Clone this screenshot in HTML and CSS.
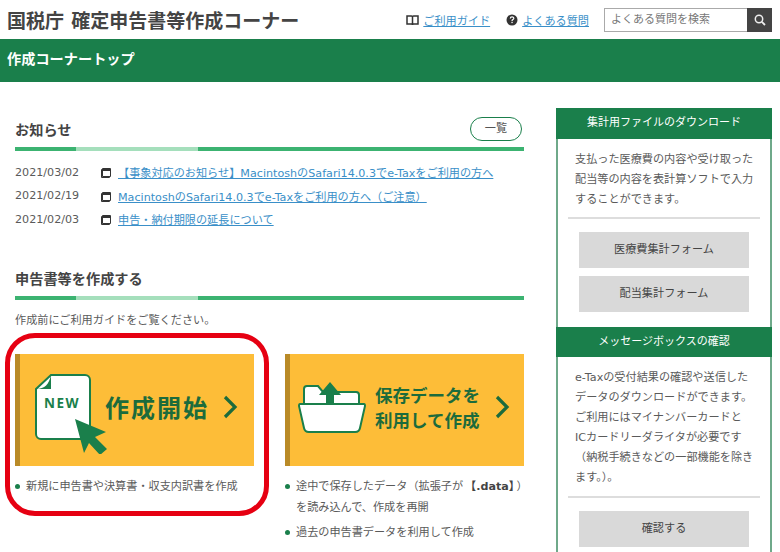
FILE: index.html
```html
<!DOCTYPE html>
<html lang="ja">

<head>
    <meta charset="UTF-8">
    <title>確定申告書等作成コーナー</title>
    <link rel="stylesheet" href="styles.css">
</head>

<body>
    <header class="site-header">
        <h1 class="site-title">国税庁 確定申告書等作成コーナー</h1>
        <div class="header-tools">
            <svg class="tool-icon" width="13" height="12" viewBox="0 0 13 12">
                <path d="M1 2h4.500c.6 0 1 .4 1 1v8c0-.6-.4-1-1-1H1zM12 2H7.500c-.6 0-1 .4-1 1v8c0-.6.4-1 1-1H12z" fill="none" stroke="#333" stroke-width="1.500"/>
            </svg>
            <a class="tool-link tool-guide" href="#">ご利用ガイド</a>
            <svg class="tool-icon" width="12" height="12" viewBox="0 0 12 12">
                <circle cx="6" cy="6" r="5.500" fill="#333"/>
                <path d="M4.300 4.600c0-2.200 3.500-2.200 3.500-.2 0 1.200-1.800 1.200-1.800 2.500" fill="none" stroke="#fff" stroke-width="1.200"/>
                <rect x="5.400" y="7.800" width="1.300" height="1.300" fill="#fff"/>
            </svg>
            <a class="tool-link" href="#">よくある質問</a>
            <form class="search">
                <input class="search-input" type="text" placeholder="よくある質問を検索">
                <button class="search-button" type="button" aria-label="検索">
                    <svg width="12" height="12" viewBox="0 0 12 12">
                        <circle cx="5" cy="5" r="3.700" fill="none" stroke="#eee" stroke-width="1.500"/>
                        <path d="M7.800 7.800L11 11" stroke="#eee" stroke-width="1.800"/>
                    </svg>
                </button>
            </form>
        </div>
    </header>

    <div class="page-bar">作成コーナートップ</div>

    <div class="layout">
        <main class="main">
            <section class="news">
                <div class="section-head">
                    <h2>お知らせ</h2>
                    <a class="pill" href="#">一覧</a>
                </div>
                <div class="rule"></div>
                <ul class="news-list">
                    <li>
                        <span class="date">2021/03/02</span>
                        <span class="win-icon"></span>
                        <a href="#">【事象対応のお知らせ】MacintoshのSafari14.0.3でe-Taxをご利用の方へ</a>
                    </li>
                    <li>
                        <span class="date">2021/02/19</span>
                        <span class="win-icon"></span>
                        <a href="#">MacintoshのSafari14.0.3でe-Taxをご利用の方へ（ご注意）</a>
                    </li>
                    <li>
                        <span class="date">2021/02/03</span>
                        <span class="win-icon"></span>
                        <a href="#">申告・納付期限の延長について</a>
                    </li>
                </ul>
            </section>

            <section class="create">
                <div class="section-head">
                    <h2>申告書等を作成する</h2>
                </div>
                <div class="rule"></div>
                <p class="lead">作成前にご利用ガイドをご覧ください。</p>
                <div class="cards">
                    <div class="card card-new">
                        <a class="big-button" href="#">
                            <svg class="new-icon" width="74" height="80" viewBox="0 0 74 80">
                                <path d="M16 1H50a5 5 0 0 1 5 5V60a5 5 0 0 1-5 5H6a5 5 0 0 1-5-5V15z" fill="#fff" stroke="#1a7f4b" stroke-width="2"/>
                                <path d="M1 15c9 0 13-5 15-14v14z" fill="#1a7f4b"/>
                                <text x="27" y="34" text-anchor="middle" class="new-text">NEW</text>
                                <path d="M40 45L71 58 60 63 72 75 65 81 54 69 49 79z" fill="#1a7f4b"/>
                            </svg>
                            <span class="big-label">作成開始</span>
                            <svg class="chevron" width="15" height="24" viewBox="0 0 15 24">
                                <path d="M2 2L12 12 2 22" fill="none" stroke="#1c6b3c" stroke-width="3.200"/>
                            </svg>
                        </a>
                        <ul class="notes">
                            <li>新規に申告書や決算書・収支内訳書を作成</li>
                        </ul>
                    </div>
                    <div class="card card-saved">
                        <a class="big-button" href="#">
                            <svg class="folder-icon" width="68" height="52" viewBox="0 0 68 52">
                                <path d="M6 24V7a3 3 0 0 1 3-3h11l5 6h33a3 3 0 0 1 3 3v11z" fill="#fff" stroke="#1a7f4b" stroke-width="2"/>
                                <path d="M2 22h64c1 0 1 1 1 2l-5 22a5 5 0 0 1-5 4H11a5 5 0 0 1-5-4L1 24c0-1 0-2 1-2z" fill="#fff" stroke="#1a7f4b" stroke-width="2"/>
                                <path d="M32 0L43 13H36V23H28V13H21z" fill="#1a7f4b"/>
                            </svg>
                            <span class="big-label-small">保存データを<br>利用して作成</span>
                            <svg class="chevron" width="15" height="24" viewBox="0 0 15 24">
                                <path d="M2 2L12 12 2 22" fill="none" stroke="#1c6b3c" stroke-width="3.200"/>
                            </svg>
                        </a>
                        <ul class="notes">
                            <li>途中で保存したデータ（拡張子が<b>【.data】</b>）<br>を読み込んで、作成を再開</li>
                            <li>過去の申告書データを利用して作成</li>
                        </ul>
                    </div>
                </div>
            </section>
            <div class="highlight"></div>
        </main>

        <aside class="side">
            <h3 class="side-head">集計用ファイルのダウンロード</h3>
            <div class="side-body">
                <p class="side-text">支払った医療費の内容や受け取った<br>配当等の内容を表計算ソフトで入力<br>することができます。</p>
                <hr class="side-line">
                <a class="side-button" href="#">医療費集計フォーム</a>
                <a class="side-button" href="#">配当集計フォーム</a>
            </div>
            <h3 class="side-head">メッセージボックスの確認</h3>
            <div class="side-body">
                <p class="side-text">e-Taxの受付結果の確認や送信した<br>データのダウンロードができます。<br>ご利用にはマイナンバーカードと<br>ICカードリーダライタが必要です<br>（納税手続きなどの一部機能を除き<br>ます。）。</p>
                <hr class="side-line">
                <a class="side-button" href="#">確認する</a>
            </div>
        </aside>
    </div>
</body>

</html>
```

FILE: styles.css
```css
html,
body {
    height: 552px;
    overflow: hidden;
}

body {
    margin: 0;
    font-family: "DejaVu Sans", "Noto Sans CJK JP", sans-serif;
    font-size: 11.150px;
    color: #5a5a5a;
    background: #fff;
}

a {
    color: #3a8fc8;
}

.site-header {
    display: flex;
    justify-content: space-between;
    align-items: center;
    height: 39px;
    padding: 0 8px 0 7px;
}

.site-title {
    margin: 0;
    font-family: "Noto Sans CJK JP", sans-serif;
    font-size: 19px;
    font-weight: 700;
    word-spacing: 3px;
    color: #444;
    white-space: nowrap;
}

.header-tools {
    display: flex;
    align-items: center;
}

.tool-icon {
    margin-right: 4px;
}

.tool-link {
    white-space: nowrap;
}

.tool-guide {
    margin-right: 16px;
}

.search {
    display: flex;
    margin-left: 15px;
}

.search-input {
    box-sizing: border-box;
    width: 143px;
    height: 24px;
    padding: 0 6px;
    border: 1px solid #aaa;
    border-right: none;
    font-family: inherit;
    font-size: 11px;
}

.search-input::placeholder {
    color: #777;
}

.search-button {
    display: flex;
    align-items: center;
    justify-content: center;
    width: 25px;
    height: 24px;
    padding: 0;
    border: none;
    background: #444;
}

.page-bar {
    height: 43px;
    padding-left: 7px;
    line-height: 38px;
    font-family: "Noto Sans CJK JP", sans-serif;
    font-size: 14.200px;
    font-weight: 700;
    color: #fff;
    background: #1a7f4b;
}

.layout {
    display: flex;
    justify-content: space-between;
    padding: 26px 8px 0 15px;
}

.main {
    position: relative;
    width: 509px;
}

.section-head {
    display: flex;
    justify-content: space-between;
    align-items: center;
    height: 39px;
}

.section-head h2 {
    margin: 0;
    padding-top: 2px;
    font-family: "Noto Sans CJK JP", sans-serif;
    font-size: 14.200px;
    font-weight: 700;
    color: #444;
}

.pill {
    box-sizing: border-box;
    width: 52px;
    height: 24px;
    margin: 3px 2px 0 0;
    border: 1px solid #1a7f4b;
    border-radius: 12px;
    line-height: 22px;
    text-align: center;
    text-decoration: none;
    color: #555;
    background: #fff;
}

.rule {
    height: 4px;
    background: linear-gradient(to right, #3cb371 61px, #a5dfbc 61px, #a5dfbc 183px, #3cb371 183px);
}

.news-list {
    margin: 9.500px 0 0;
    padding: 0;
    list-style: none;
}

.news-list li {
    display: flex;
    align-items: center;
    height: 23.500px;
    white-space: nowrap;
}

.date {
    width: 87px;
}

.win-icon {
    box-sizing: border-box;
    width: 9px;
    height: 9px;
    margin: 1px 7px 0 0;
    border: 1.500px solid #333;
    border-top-width: 3px;
    border-radius: 1px;
    box-shadow: -1px 1px 0 #333;
}

.create {
    margin-top: 26.500px;
}

.create .section-head {
    height: 38px;
}

.lead {
    margin: 13px 0 0;
    line-height: 16px;
}

.cards {
    display: flex;
    gap: 31px;
    margin-top: 25px;
}

.card {
    width: 239px;
}

.big-button {
    box-sizing: border-box;
    display: flex;
    align-items: center;
    height: 112px;
    padding-bottom: 6px;
    border-left: 5px solid #b98a27;
    text-decoration: none;
    background: #fdbd38;
}

.new-icon {
    flex: none;
    margin: 15px 0 0 15px;
}

.new-text {
    font-family: "Open Sans", sans-serif;
    font-size: 13.500px;
    font-weight: 700;
    letter-spacing: 1.500px;
    fill: #1a7f4b;
}

.big-label {
    margin-left: -4px;
    font-family: "Noto Sans CJK JP", sans-serif;
    font-size: 24px;
    font-weight: 700;
    letter-spacing: 2px;
    white-space: nowrap;
    color: #1c6b3c;
}

.chevron {
    flex: none;
    margin-left: 14px;
}

.folder-icon {
    flex: none;
    margin: 2px 0 0 8px;
}

.big-label-small {
    margin-left: 9px;
    font-family: "Noto Sans CJK JP", sans-serif;
    font-size: 17.500px;
    line-height: 25px;
    font-weight: 700;
    white-space: nowrap;
    color: #1c6b3c;
}

.card-saved .chevron {
    margin-left: 15px;
}

.notes {
    margin: 10px 0 0;
    padding: 0;
    list-style: none;
}

.notes li {
    position: relative;
    padding-left: 11px;
    margin-bottom: 4px;
    line-height: 21px;
    white-space: nowrap;
}

.notes li::before {
    content: "";
    position: absolute;
    left: 0;
    top: 8px;
    width: 5px;
    height: 5px;
    border-radius: 50%;
    background: #1a7f4b;
}

.notes b {
    margin: 0 2px;
    color: #444;
}

.highlight {
    position: absolute;
    left: -10px;
    top: 225px;
    width: 264px;
    height: 183px;
    box-sizing: border-box;
    border: 5px solid #e60012;
    border-radius: 30px;
    pointer-events: none;
}

.side {
    box-sizing: border-box;
    width: 216px;
    height: 444px;
    border-left: 2px solid #6fa98a;
    border-right: 2px solid #6fa98a;
}

.side-head {
    height: 30.500px;
    margin: 0 -2px;
    font-size: 11px;
    font-weight: 400;
    line-height: 29px;
    text-align: center;
    color: #fff;
    background: #1a7f4b;
}

.side-body {
    padding: 11px 10px 6.500px;
}

.side-text {
    margin: 0 -3px 0 0;
    padding: 0 0 7.500px 7px;
    line-height: 20px;
    white-space: nowrap;
}

.side-line {
    height: 2px;
    margin: 0 0 13px;
    border: none;
    background: #ddd;
}

.side-button {
    display: block;
    width: 170px;
    height: 36px;
    margin: 0 auto 8px;
    line-height: 36px;
    text-align: center;
    text-decoration: none;
    color: #444;
    background: #d9d9d9;
}
```
